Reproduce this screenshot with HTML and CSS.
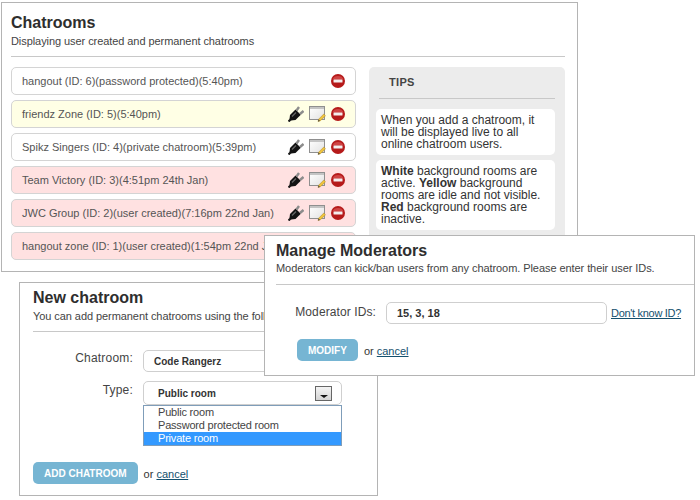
FILE: index.html
```html
<!DOCTYPE html>
<html lang="en">
<head>
    <meta charset="UTF-8">
    <meta name="viewport" content="width=device-width, initial-scale=1.0">
    <title>Chatrooms Admin</title>
    <link rel="stylesheet" href="styles.css">
</head>
<body>
    <svg class="icon-defs" width="0" height="0">
        <defs>
            <linearGradient id="note-fill" x1="0" y1="0" x2="1" y2="1">
                <stop offset="0" stop-color="#ffffff"/>
                <stop offset="1" stop-color="#e2e2e2"/>
            </linearGradient>
            <symbol id="i-plug" viewBox="0 0 16 16">
                <path d="M0.5 15.5 L3 13" stroke="#1a1a1a" stroke-width="2.2" fill="none"/>
                <path d="M1.5 13 L2 9 L7.5 3.5 L12.8 8.8 L7.5 14 L3 14.5 Z" fill="#131313"/>
                <path d="M4 10.5 L8 6.5" stroke="#666" stroke-width="1.2" fill="none"/>
                <path d="M8.5 4.5 L11 1 M12 8 L15.5 5" stroke="#8c8c8c" stroke-width="2.4" fill="none"/>
            </symbol>
            <symbol id="i-note" viewBox="0 0 17 16">
                <rect x="0.5" y="0.5" width="15" height="13" fill="url(#note-fill)" stroke="#8f8f8f"/>
                <rect x="1" y="1" width="14" height="2" fill="#c4c4c4"/>
                <path d="M9 15.5 L9.8 13 L14.8 8 L16.5 9.7 L11.5 14.7 Z" fill="#f0c43c" stroke="#a8872a" stroke-width="0.5"/>
                <path d="M9 15.5 L9.6 13.6 L11 14.9 Z" fill="#444"/>
            </symbol>
            <symbol id="i-remove" viewBox="0 0 14 14">
                <circle cx="7" cy="7" r="7" fill="#b51a1a"/>
                <path d="M1.5 5.5 A5.8 5 0 0 1 12.5 5.5 Z" fill="#cf4444"/>
                <rect x="2.5" y="5.5" width="9" height="3" rx="0.5" fill="#f3eeee"/>
            </symbol>
        </defs>
    </svg>

    <section class="window window-rooms">
        <h1>Chatrooms</h1>
        <p class="subtitle">Displaying user created and permanent chatrooms</p>
        <hr>
        <div class="rooms-body">
            <ul class="room-list">
                <li class="room">
                    <span>hangout (ID: 6)(password protected)(5:40pm)</span>
                    <span class="room-icons">
                        <svg class="ico-remove"><use href="#i-remove"/></svg>
                    </span>
                </li>
                <li class="room idle">
                    <span>friendz Zone (ID: 5)(5:40pm)</span>
                    <span class="room-icons">
                        <svg class="ico-plug"><use href="#i-plug"/></svg>
                        <svg class="ico-note"><use href="#i-note"/></svg>
                        <svg class="ico-remove"><use href="#i-remove"/></svg>
                    </span>
                </li>
                <li class="room">
                    <span>Spikz Singers (ID: 4)(private chatroom)(5:39pm)</span>
                    <span class="room-icons">
                        <svg class="ico-plug"><use href="#i-plug"/></svg>
                        <svg class="ico-note"><use href="#i-note"/></svg>
                        <svg class="ico-remove"><use href="#i-remove"/></svg>
                    </span>
                </li>
                <li class="room inactive">
                    <span>Team Victory (ID: 3)(4:51pm 24th Jan)</span>
                    <span class="room-icons">
                        <svg class="ico-plug"><use href="#i-plug"/></svg>
                        <svg class="ico-note"><use href="#i-note"/></svg>
                        <svg class="ico-remove"><use href="#i-remove"/></svg>
                    </span>
                </li>
                <li class="room inactive">
                    <span>JWC Group (ID: 2)(user created)(7:16pm 22nd Jan)</span>
                    <span class="room-icons">
                        <svg class="ico-plug"><use href="#i-plug"/></svg>
                        <svg class="ico-note"><use href="#i-note"/></svg>
                        <svg class="ico-remove"><use href="#i-remove"/></svg>
                    </span>
                </li>
                <li class="room inactive">
                    <span>hangout zone (ID: 1)(user created)(1:54pm 22nd Jan)</span>
                </li>
            </ul>
            <aside class="tips">
                <h2>TIPS</h2>
                <hr>
                <p>When you add a chatroom, it will be displayed live to all online chatroom users.</p>
                <p><b>White</b> background rooms are active. <b>Yellow</b> background rooms are idle and not visible. <b>Red</b> background rooms are inactive.</p>
            </aside>
        </div>
    </section>

    <section class="window window-new">
        <h1>New chatroom</h1>
        <p class="subtitle">You can add permanent chatrooms using the following form.</p>
        <hr>
        <div class="field">
            <label class="new-label">Chatroom:</label>
            <div class="textbox new-input">Code Rangerz</div>
        </div>
        <div class="field field-type">
            <label class="new-label">Type:</label>
            <div class="select-wrap">
                <div class="textbox select-box">
                    Public room
                    <span class="select-arrow"></span>
                </div>
                <ul class="select-menu">
                    <li>Public room</li>
                    <li>Password protected room</li>
                    <li class="selected">Private room</li>
                </ul>
            </div>
        </div>
        <div class="actions actions-new">
            <button type="button" class="btn">ADD CHATROOM</button>
            <span class="or">or <a href="#">cancel</a></span>
        </div>
    </section>

    <section class="window window-mods">
        <h1>Manage Moderators</h1>
        <p class="subtitle">Moderators can kick/ban users from any chatroom. Please enter their user IDs.</p>
        <hr>
        <div class="field field-mods">
            <label class="mods-label">Moderator IDs:</label>
            <div class="textbox mods-input">15, 3, 18</div>
            <a href="#" class="know-link">Don't know ID?</a>
        </div>
        <div class="actions actions-mods">
            <button type="button" class="btn">MODIFY</button>
            <span class="or">or <a href="#">cancel</a></span>
        </div>
    </section>
</body>
</html>
```

FILE: styles.css
```css
* {
    box-sizing: border-box;
}

html, body {
    height: 100%;
}

body {
    margin: 0;
    position: relative;
    overflow: hidden;
    background-color: #ffffff;
    font-family: "Liberation Sans", Arial, sans-serif;
    font-size: 11px;
    color: #333;
}

.icon-defs {
    position: absolute;
}

/* the three windows sit freely on the canvas, overlapping */
.window {
    position: absolute;
    background-color: #ffffff;
    border: 1px solid #b4b4b4;
    overflow: hidden;
}

.window-rooms {
    left: 1px;
    top: 2px;
    width: 577px;
    height: 270px;
    padding: 10px 12px 0 9px;
}

.window-new {
    left: 19px;
    top: 282px;
    width: 359px;
    height: 214px;
    padding: 5px 13px 0 13px;
}

.window-mods {
    left: 264px;
    top: 235px;
    width: 431px;
    height: 141px;
    padding: 5px 0 0 11px;
}

h1 {
    margin: 0;
    font-size: 16px;
    line-height: 20px;
    font-weight: bold;
    color: #2e2e2e;
}

.subtitle {
    margin: 1px 0 0;
    line-height: 14px;
    letter-spacing: -0.07px;
    white-space: nowrap;
    color: #444;
}

hr {
    margin: 0;
    border: none;
    border-top: 1px solid #c8c8c8;
}

.window-rooms hr {
    margin-top: 8px;
}

.window-new hr {
    margin-top: 8px;
}

.window-mods .subtitle {
    margin-top: 0;
}

.window-mods hr {
    margin-top: 9px;
}

.rooms-body {
    display: flex;
    gap: 13px;
    margin-top: 10px;
}

.room-list {
    list-style: none;
    margin: 0;
    padding: 0;
    width: 345px;
    display: flex;
    flex-direction: column;
    gap: 5px;
}

.room {
    height: 28px;
    padding: 0 10px;
    display: flex;
    align-items: center;
    justify-content: space-between;
    border: 1px solid #d4d4d4;
    border-radius: 5px;
    background-color: #ffffff;
    color: #555;
}

.room.idle {
    background-color: #ffffe5;
}

.room.inactive {
    background-color: #ffe1e1;
}

.room-icons {
    display: flex;
    align-items: center;
    gap: 5px;
}

.ico-plug {
    width: 16px;
    height: 16px;
}

.ico-note {
    width: 17px;
    height: 16px;
}

.ico-remove {
    width: 14px;
    height: 14px;
}

.tips {
    width: 196px;
    height: 210px;
    padding: 0 10px 0 7px;
    background-color: #ececec;
    border-radius: 5px;
}

.tips h2 {
    margin: 0;
    padding: 8px 0 0 13px;
    height: 31px;
    font-size: 11px;
    line-height: 14px;
    font-weight: bold;
    letter-spacing: 0.3px;
    color: #444;
}

.tips hr {
    margin: 0 0 10px 3px;
}

.tips p {
    margin: 0 0 5px;
    padding: 5px 5px;
    background-color: #ffffff;
    border-radius: 5px;
    font-size: 12px;
    line-height: 12px;
    color: #333;
}

.field {
    display: flex;
    align-items: flex-start;
}

.new-label {
    width: 100px;
    text-align: right;
    font-size: 12px;
    letter-spacing: 0.2px;
    color: #444;
}

.textbox {
    border: 1px solid #cfcfcf;
    border-radius: 5px;
    background-color: #ffffff;
    font-weight: bold;
    font-size: 11px;
    color: #333;
}

.window-new .field {
    gap: 10px;
    margin-top: 17px;
}

.window-new .new-label {
    line-height: 18px;
}

.new-input {
    width: 199px;
    height: 22px;
    margin-top: 1px;
    line-height: 22px;
    padding-left: 10px;
    font-size: 10px;
}

.window-new .field-type {
    margin-top: 9px;
}

.select-wrap {
    width: 199px;
}

.select-box {
    height: 24px;
    line-height: 24px;
    padding-left: 14px;
    font-size: 10px;
    position: relative;
}

.select-arrow {
    position: absolute;
    right: 9px;
    top: 4px;
    width: 17px;
    height: 15px;
    border: 1px solid #666;
    background: linear-gradient(#f4f4f4, #d4d4d4);
}

.select-arrow::after {
    content: "";
    position: absolute;
    left: 4px;
    top: 8px;
    border-left: 4px solid transparent;
    border-right: 4px solid transparent;
    border-top: 3px solid #111;
}

.select-menu {
    list-style: none;
    margin: 0;
    padding: 0;
    height: 41px;
    border: 1px solid #7f9db9;
    background-color: #ffffff;
}

.select-menu li {
    height: 13px;
    line-height: 13px;
    padding-left: 14px;
    letter-spacing: -0.2px;
    color: #444;
}

.select-menu .selected {
    background-color: #3399ff;
    color: #ffffff;
}

.actions {
    display: flex;
    align-items: center;
    gap: 6px;
}

.actions-new {
    margin-top: 16px;
}

.actions-mods {
    margin: 15px 0 0 21px;
}

.btn {
    height: 22px;
    padding: 0 11px;
    border: none;
    border-radius: 5px;
    background-color: #76b5d3;
    color: #ffffff;
    font-family: inherit;
    font-size: 10px;
    font-weight: bold;
}

.or {
    padding-top: 2px;
    font-size: 11px;
    color: #333;
}

.or a, .know-link {
    color: #14506e;
}

.field-mods {
    margin-top: 17px;
    align-items: center;
}

.mods-label {
    width: 100px;
    padding-bottom: 2px;
    text-align: right;
    font-size: 12px;
    letter-spacing: 0.1px;
    color: #444;
}

.mods-input {
    width: 221px;
    height: 22px;
    margin-left: 10px;
    padding-left: 10px;
    line-height: 20px;
}

.know-link {
    margin-left: 4px;
    font-size: 11px;
    letter-spacing: -0.3px;
}
```
